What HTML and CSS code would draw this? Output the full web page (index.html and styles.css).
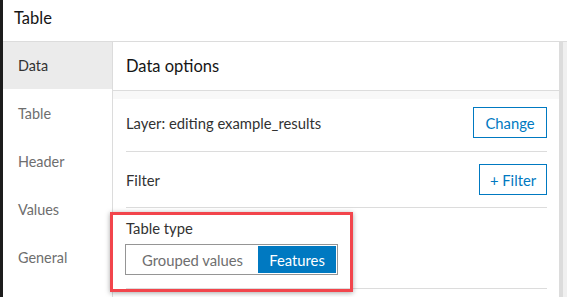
FILE: index.html
```html
<!DOCTYPE html>
<html lang="en">
<head>
<meta charset="UTF-8" />
<title>Table</title>
<link rel="stylesheet" href="styles.css">
</head>
<body>
<div class="edge"></div>
<div class="app">
  <div class="header">Table</div>
  <div class="content">
    <div class="sidebar">
      <div class="nav-item active">Data</div>
      <div class="nav-item">Table</div>
      <div class="nav-item">Header</div>
      <div class="nav-item">Values</div>
      <div class="nav-item">General</div>
    </div>
    <div class="main">
      <div class="panel-head">Data options</div>
      <div class="gap-strip"></div>
      <div class="card">
        <div class="row first">
          <span>Layer: editing example_results</span>
          <button class="btn btn-change">Change</button>
        </div>
        <div class="row">
          <span>Filter</span>
          <button class="btn btn-filter">+ Filter</button>
        </div>
        <div class="row type-row">
          <div class="label">Table type</div>
          <div class="segmented">
            <div class="seg">Grouped values</div>
            <div class="seg on">Features</div>
          </div>
        </div>
      </div>
    </div>
    <div class="scrollbar"></div>
  </div>
</div>
<div class="highlight"></div>
</body>
</html>
```
FILE: styles.css
```css
body { margin:0; width:567px; height:297px; overflow:hidden; display:flex; font-family:'Lato',sans-serif; color:#323232; background:#fff; position:relative; }
.edge { width:3px; background:#1c1c1c; flex-shrink:0; }
.app { flex:1; display:flex; flex-direction:column; }
.header { height:42px; border-bottom:1px solid #dcdcdc; display:flex; align-items:center; padding:0 0 6px 11px; font-size:16.5px; color:#151515; box-sizing:border-box; }
.content { flex:1; display:flex; }
.sidebar { width:109px; border-right:1px solid #dcdcdc; flex-shrink:0; }
.nav-item { height:48px; display:flex; align-items:center; padding-left:15px; font-size:14.4px; color:#6e6e6e; }
.nav-item.active { height:47px; background:#ebebeb; color:#323232; }
.main { flex:1; display:flex; flex-direction:column; }
.panel-head { height:48px; border-bottom:1px solid #dcdcdc; display:flex; align-items:center; padding-left:13px; font-size:16.5px; color:#151515; }
.gap-strip { height:8px; background:#f8f8f8; }
.card { padding:0 12px 0 13px; }
.row { display:flex; align-items:center; justify-content:space-between; padding:12px 0; border-bottom:1px solid #dcdcdc; font-size:14.8px; color:#323232; }
.row.first { padding:8px 0 13px; }
.btn { font-family:inherit; font-size:14.8px; color:#0079c1; background:#fff; border:1px solid #0079c1; height:31px; padding:0; }
.btn-change { width:74px; }
.btn-filter { width:68px; }
.type-row { display:block; padding:11px 0 13px; }
.label { height:18px; line-height:18px; margin-bottom:7px; }
.segmented { display:inline-flex; border:1px solid #959595; padding:1px; height:31px; box-sizing:border-box; margin-left:-1px; }
.seg { display:flex; align-items:center; justify-content:center; font-size:14.8px; color:#6e6e6e; }
.seg:first-child { width:131px; }
.seg.on { width:78px; background:#0079c1; color:#fff; }
.scrollbar { width:7px; flex-shrink:0; border-left:1px solid #dcdcdc; background:linear-gradient(90deg,#dcdcdc 0 3px,#f0f0f0 3px); }
.highlight { position:absolute; left:110px; top:212px; width:243px; height:80px; box-sizing:border-box; border:3px solid #f2454c; box-shadow:0 1px 5px rgba(0,0,0,0.35); }
```
